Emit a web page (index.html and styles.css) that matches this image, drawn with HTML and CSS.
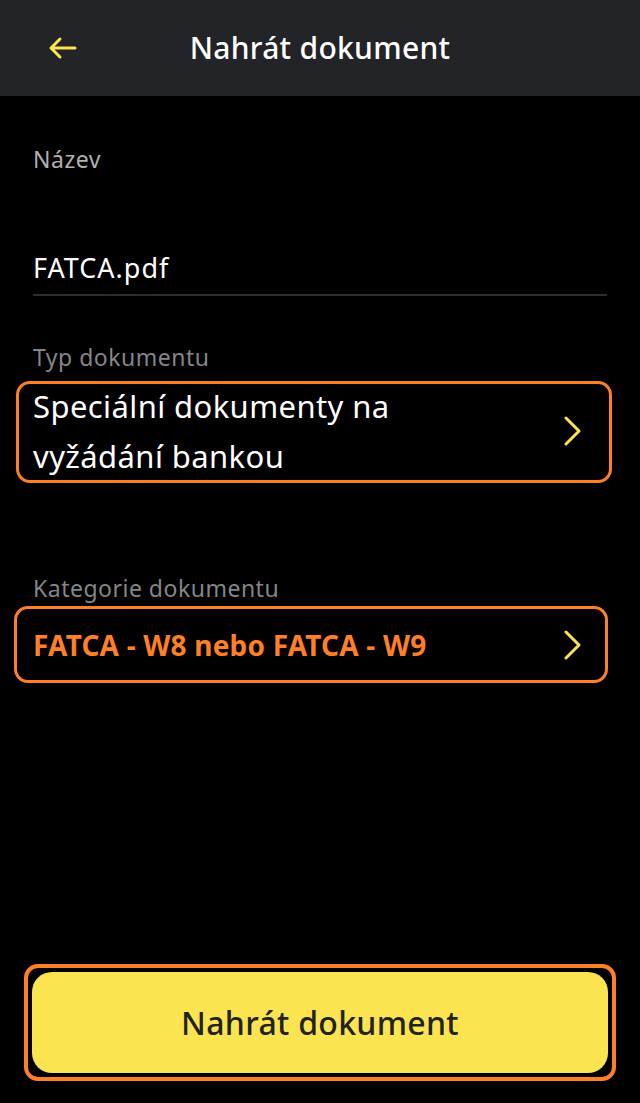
FILE: index.html
```html
<!DOCTYPE html>
<html lang="cs">
<head>
  <meta charset="UTF-8" />
  <meta name="viewport" content="width=device-width, initial-scale=1.0"/>
  <title>Nahrát dokument</title>
  <link rel="stylesheet" href="styles.css">
</head>
<body>
  <header class="topbar">
    <button class="back" aria-label="Zpět">
      <svg width="30" height="24" viewBox="0 0 30 24" fill="none" stroke="#fbe44f" stroke-width="3" stroke-linecap="round" stroke-linejoin="round">
        <path d="M27 12H3M12 3L3 12l9 9"/>
      </svg>
    </button>
    <h1>Nahrát dokument</h1>
  </header>

  <main class="form">
    <div class="field">
      <label class="label">Název</label>
      <div class="value">FATCA.pdf</div>
    </div>

    <div class="field select-field">
      <label class="label">Typ dokumentu</label>
      <div class="select">
        <span class="select-text">Speciální dokumenty na<br>vyžádání bankou</span>
        <svg class="chevron" width="18" height="30" viewBox="0 0 18 30" fill="none" stroke="#fbe44f" stroke-width="3" stroke-linecap="round" stroke-linejoin="round">
          <path d="M2 2l13 13L2 28"/>
        </svg>
      </div>
    </div>

    <div class="field select-field category">
      <label class="label">Kategorie dokumentu</label>
      <div class="select small">
        <span class="select-text accent">FATCA - W8 nebo FATCA - W9</span>
        <svg class="chevron" width="18" height="30" viewBox="0 0 18 30" fill="none" stroke="#fbe44f" stroke-width="3" stroke-linecap="round" stroke-linejoin="round">
          <path d="M2 2l13 13L2 28"/>
        </svg>
      </div>
    </div>
  </main>

  <footer class="actions">
    <div class="focus-ring">
      <button class="primary">Nahrát dokument</button>
    </div>
  </footer>
</body>
</html>
```

FILE: styles.css
```css
* {
  box-sizing: border-box;
}
html, body {
  height: 100%;
}
body {
  margin: 0;
  background: #000;
  color: #fff;
  font-family: "Noto Sans", "Open Sans", sans-serif;
  display: flex;
  flex-direction: column;
}
.topbar {
  height: 96px;
  background: #232428;
  display: flex;
  align-items: center;
  padding: 0 30px 0 48px;
}
.back {
  background: none;
  border: none;
  padding: 0;
  display: flex;
  width: 32px;
}
.topbar h1 {
  flex: 1;
  margin: 0 50px 2px 0;
  text-align: center;
  font-size: 30px;
  font-weight: 500;
  letter-spacing: 0.3px;
}
.form {
  flex: 1;
  padding: 0 28px 0 16px;
}
.field {
  padding-left: 17px;
}
.label {
  display: block;
  color: #9c9c9c;
  font-size: 23px;
  line-height: 30px;
  letter-spacing: 0.5px;
}
.field:first-child {
  padding-top: 48px;
}
.field:first-child .label {
  color: #b0b0b0;
}
.value {
  margin-top: 77px;
  font-size: 27px;
  line-height: 34px;
  letter-spacing: 1px;
  padding-bottom: 9px;
  border-bottom: 2px solid #2e2e2e;
  margin-right: 5px;
}
.select-field {
  padding-left: 0;
  margin-top: 46px;
}
.select-field .label {
  color: #85858a;
  padding-left: 17px;
  margin-bottom: 9px;
}
.select-field.category {
  margin-top: 90px;
}
.category .label {
  margin-bottom: 3px;
}
.select {
  border: 3px solid #ff7f27;
  border-radius: 14px;
  height: 102px;
  display: flex;
  align-items: center;
  padding: 0 27px 2px 14px;
}
.select.small {
  height: 77px;
  margin-left: -2px;
  margin-right: 4px;
  padding: 0 23px 0 16px;
}
.select-text {
  flex: 1;
  font-size: 31px;
  line-height: 50px;
  letter-spacing: 0.4px;
}
.select-text.accent {
  color: #ff7f27;
  font-weight: 700;
  font-size: 28px;
  line-height: 34px;
  letter-spacing: 0.2px;
}
.chevron {
  flex: none;
}
.actions {
  padding: 0 24px 22px 24px;
}
.focus-ring {
  border: 4px solid #ff7f27;
  border-radius: 14px;
  padding: 4px;
}
.primary {
  width: 100%;
  height: 101px;
  background: #fbe44f;
  color: #222;
  border: none;
  border-radius: 20px;
  font-family: "Noto Sans", "Open Sans", sans-serif;
  font-size: 32px;
  font-weight: 500;
  letter-spacing: 0.3px;
}
```
